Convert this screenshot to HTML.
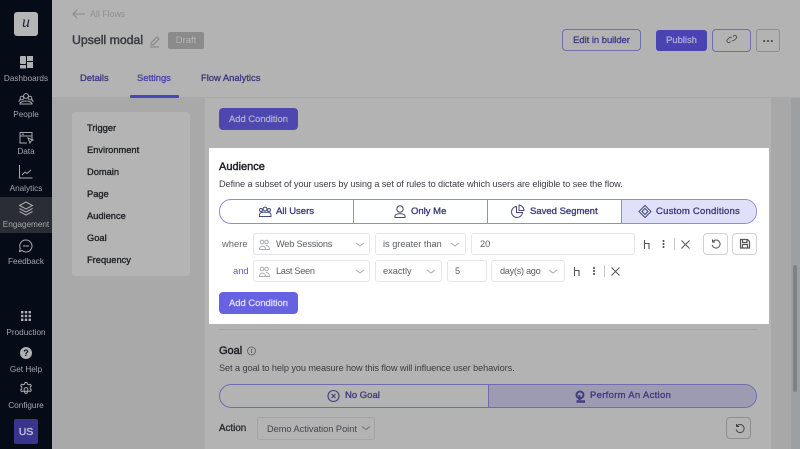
<!DOCTYPE html>
<html><head><meta charset="utf-8">
<style>
html,body{margin:0;padding:0}
body{width:800px;height:449px;overflow:hidden;position:relative;background:#a9a9a9;font-family:"Liberation Sans",sans-serif;font-size:10px;color:#333}
div,span.t{position:absolute;box-sizing:border-box}
.t{white-space:nowrap;line-height:20px;height:20px}
.w{-webkit-text-stroke:.35px currentColor}
svg{position:absolute;overflow:visible}
.s{background:#fff;border:1px solid #e6e6ea;border-radius:3px}
.n{color:#a5a7ab;font-size:8.2px;text-align:center;left:0;width:52px;margin-top:1px}
.m{color:#22242a;font-size:9.300px;left:87px;-webkit-text-stroke:.35px currentColor}
.g{color:#5c5e64;font-size:9.200px}
.ic{fill:none;stroke:#a8aaae;stroke-width:1}
.dk{fill:none;stroke:#444a7a;stroke-width:1}
.p{color:#3f3d7c;font-size:9.500px;-webkit-text-stroke:.35px currentColor}
</style></head><body>
<!-- header -->
<div style="left:52px;top:0;width:748px;height:98px;background:#b3b3b3;border-bottom:1px solid #a9a9a9"></div>
<!-- content bg -->
<div style="left:205px;top:98px;width:566px;height:351px;background:#b3b3b3"></div>
<div style="left:771px;top:98px;width:20px;height:351px;background:#a8a8a8"></div>
<div style="left:791px;top:98px;width:9px;height:351px;background:#9d9fa0"></div>
<div style="left:793px;top:265px;width:4px;height:127px;background:#7f8284;border-radius:2px"></div>
<!-- sidebar -->
<div style="left:0;top:0;width:52px;height:449px;background:#060b18"></div>
<div style="left:0;top:197px;width:52px;height:36px;background:#2a2d33"></div>
<div style="left:14px;top:12px;width:24px;height:24px;background:#b5b5b5;border-radius:3px"></div>
<span class="t" style="left:14px;top:13px;width:24px;text-align:center;font-family:'Liberation Serif',serif;font-style:italic;font-size:16px;color:#23263a">u</span>
<svg style="left:0;top:0" width="52" height="449">
<g fill="#b0b1b3"><rect x="20" y="56" width="6" height="8" rx="1"/><rect x="27" y="56" width="6" height="5"/><rect x="27" y="62" width="6" height="6"/><rect x="20" y="65" width="6" height="3.500"/></g>
<g fill="none" stroke="#a9aaac" stroke-width="1"><circle cx="26" cy="96" r="2.400"/><circle cx="22" cy="98" r="1.800"/><circle cx="30" cy="98" r="1.800"/><path d="M20 104c0-4 12-4 12 0zM19 102c0-2 1-2.500 2-2.500M33 102c0-2-1-2.500-2-2.500"/>
<path d="M32 141v-8.500h-12v10.500h7M20 136h12M22 134.200h2"/><path d="M28 138l5 2-2 1-1 2z"/>
<path d="M19.500 165v13h13M22 175l3-3 2 1.500 4-3.500"/>
<path d="M26 202l6.500 3.500-6.500 3.500-6.500-3.500zM19.500 208.500l6.500 3.500 6.500-3.500M19.500 211.500l6.500 3.500 6.500-3.500"/>
<path d="M26 240a6 6 0 1 1-4 10.500l-2.500 1 .8-3a6 6 0 0 1 5.700-8.500zM23 246h6"/>
<circle cx="26" cy="389.500" r="1.900"/><path d="M25 382.500h2l.4 1.600 1.500.7 1.500-.6 1 1.700-1.200 1.100v1.800l1.200 1.100-1 1.700-1.500-.6-1.500.7-.4 1.600h-2l-.4-1.600-1.500-.7-1.500.6-1-1.700 1.200-1.100v-1.800l-1.200-1.100 1-1.700 1.500.6 1.500-.7z"/></g>
<g fill="#b0b1b3"><rect x="21" y="311" width="2.400" height="2.400"/><rect x="24.800" y="311" width="2.400" height="2.400"/><rect x="28.600" y="311" width="2.400" height="2.400"/><rect x="21" y="314.800" width="2.400" height="2.400"/><rect x="24.800" y="314.800" width="2.400" height="2.400"/><rect x="28.600" y="314.800" width="2.400" height="2.400"/><rect x="21" y="318.600" width="2.400" height="2.400"/><rect x="24.800" y="318.600" width="2.400" height="2.400"/><rect x="28.600" y="318.600" width="2.400" height="2.400"/><circle cx="26" cy="353" r="6"/></g>
</svg>
<span class="t" style="left:20px;top:343px;width:12px;text-align:center;font-weight:bold;font-size:9px;color:#060b18">?</span>
<span class="t n" style="top:68px">Dashboards</span>
<span class="t n" style="top:104px">People</span>
<span class="t n" style="top:141px">Data</span>
<span class="t n" style="top:178px">Analytics</span>
<span class="t n" style="top:214px">Engagement</span>
<span class="t n" style="top:251px">Feedback</span>
<span class="t n" style="top:322px">Production</span>
<span class="t n" style="top:359px">Get Help</span>
<span class="t n" style="top:395px">Configure</span>
<div style="left:14px;top:419px;width:24px;height:25px;background:#39358f;border-radius:2px"></div>
<span class="t w" style="left:14px;top:422px;width:24px;text-align:center;font-size:10.500px;color:#c6c6d8">US</span>
<!-- top -->
<svg style="left:0;top:0" width="800" height="100" fill="none">
<path d="M85 14h-12M77 10l-4 4 4 4" stroke="#8a8a8a"/>
<path d="M151 43l6-6 2 2-6 6h-2zM150 47h9" stroke="#858585"/>
<path d="M733 36.500l.8-.8a1.800 1.800 0 0 1 2.500 2.500l-2 2a1.800 1.800 0 0 1-2.500 0M730.500 41.500l-.8.8a1.800 1.800 0 0 1-2.500-2.500l2-2a1.800 1.800 0 0 1 2.500 0" stroke="#555"/>
</svg>
<span class="t" style="left:90px;top:4px;font-size:8.800px;color:#8f8f8f">All Flows</span>
<span class="t w" style="left:72px;top:30px;font-size:12.300px;color:#383a42;-webkit-text-stroke-width:.45px">Upsell modal</span>
<div style="left:168px;top:32px;width:36px;height:17px;background:#8b8b8b;border-radius:2px"></div>
<span class="t" style="left:168px;top:31px;width:36px;text-align:center;font-size:9.500px;color:#b5b5b5">Draft</span>
<span class="t w" style="left:80px;top:68px;font-size:9.400px;color:#3f3d7c">Details</span>
<span class="t w" style="left:137px;top:68px;font-size:9.400px;color:#4a47a8">Settings</span>
<span class="t w" style="left:201px;top:68px;font-size:9.400px;color:#3f3d7c">Flow Analytics</span>
<div style="left:130px;top:95px;width:49px;height:3px;background:#4a47b4;border-radius:1px"></div>
<div style="left:562px;top:29px;width:79px;height:22px;border:1px solid #6f6cb0;border-radius:4px"></div>
<span class="t w" style="left:562px;top:30px;width:79px;text-align:center;font-size:9.400px;color:#3f3d8f">Edit in builder</span>
<div style="left:656px;top:30px;width:51px;height:21px;background:#4a44b2;border-radius:3px"></div>
<span class="t w" style="left:656px;top:30px;width:51px;text-align:center;font-size:9.400px;color:#a9a8cf">Publish</span>
<div style="left:712px;top:29px;width:39px;height:23px;border:1px solid #6f6cb0;border-radius:4px"></div>
<div style="left:756px;top:29px;width:24px;height:23px;border:1px solid #8e8e8e;border-radius:3px"></div>
<svg style="left:756px;top:29px" width="24" height="23"><g fill="#3a3a3a"><circle cx="8.200" cy="12" r="1"/><circle cx="12" cy="12" r="1"/><circle cx="15.800" cy="12" r="1"/></g></svg>
<!-- left menu -->
<div style="left:72px;top:112px;width:118px;height:164px;background:#b4b4b4;border-radius:3px"></div>
<span class="t m" style="top:118px">Trigger</span>
<span class="t m" style="top:140px">Environment</span>
<span class="t m" style="top:162px">Domain</span>
<span class="t m" style="top:184px">Page</span>
<span class="t m" style="top:206px">Audience</span>
<span class="t m" style="top:228px">Goal</span>
<span class="t m" style="top:250px">Frequency</span>
<!-- upper add -->
<div style="left:219px;top:108px;width:79px;height:22px;background:#4d48b0;border-radius:4px"></div>
<span class="t w" style="left:219px;top:109px;width:79px;text-align:center;font-size:9.400px;color:#a9a8d0">Add Condition</span>
<!-- white -->
<div style="left:209px;top:148px;width:560px;height:176px;background:#fff"></div>
<span class="t w" style="left:219px;top:157px;font-size:11px;color:#1e2027;-webkit-text-stroke-width:.45px">Audience</span>
<span class="t" style="left:219px;top:174px;font-size:9.200px;letter-spacing:-.09px;color:#3c3e46">Define a subset of your users by using a set of rules to dictate which users are eligible to see the flow.</span>
<div style="left:219px;top:199px;width:538px;height:25px;border:1px solid #8e8cd8;border-radius:12px;overflow:hidden;background:#fff">
<div style="left:402px;top:0;width:134px;height:23px;background:#e0e0f8"></div>
<div style="left:133px;top:0;width:1px;height:23px;background:#8e8cd8"></div>
<div style="left:267px;top:0;width:1px;height:23px;background:#8e8cd8"></div>
<div style="left:401px;top:0;width:1px;height:23px;background:#8e8cd8"></div>
</div>
<span class="t" style="left:222px;top:234px;font-size:9.400px;color:#666">where</span>
<span class="t" style="left:233px;top:261px;font-size:9.400px;color:#5d5ad0">and</span>
<div class="s" style="left:253px;top:233px;width:117px;height:22px"></div>
<div class="s" style="left:375px;top:233px;width:91px;height:22px"></div>
<div class="s" style="left:471px;top:233px;width:164px;height:22px"></div>
<div class="s" style="left:253px;top:260px;width:117px;height:22px"></div>
<div class="s" style="left:375px;top:260px;width:67px;height:22px"></div>
<div class="s" style="left:447px;top:260px;width:40px;height:22px"></div>
<div class="s" style="left:491px;top:260px;width:74px;height:22px"></div>
<svg style="left:0;top:0" width="800" height="449">
<g class="dk"><circle cx="265" cy="209" r="1.900"/><circle cx="261" cy="210" r="1.500"/><circle cx="269" cy="210" r="1.500"/><path d="M259.500 216.500h11.500v-1.500c0-2.500-3-2.800-3-2.800h-5.500s-3 .3-3 2.800z"/>
<circle cx="400" cy="209" r="3.200"/><path d="M395 217.500v-1.500c0-3 10-3 10 0v1.500z"/>
<path d="M516.500 206.500a5.500 5.500 0 1 0 6 6h-6zM519 205v5.500h5a5.500 5.500 0 0 0-5-5.500z"/>
<path d="M645 205.500l6 6-6 6-6-6zM645 208.500l3 3-3 3-3-3z"/></g>
<g class="ic"><circle cx="262" cy="242" r="1.800"/><circle cx="266.500" cy="242" r="1.800"/><path d="M259.500 249.500c0-4.500 6-4.500 6 0zM266 245.500c2 0 3.500 1.500 3.500 4h-3.500"/>
<g transform="translate(0,27)"><circle cx="262" cy="242" r="1.800"/><circle cx="266.500" cy="242" r="1.800"/><path d="M259.500 249.500c0-4.500 6-4.500 6 0zM266 245.500c2 0 3.500 1.500 3.500 4h-3.500"/></g>
<path d="M356 243l4 3 4-3M451 243l4 3 4-3M427 270l4 3 4-3M356 270l4 3 4-3M549 270l4 3 4-3"/></g>
<path d="M644.500 240v9M644.500 243.500h4.500v5.500M574.500 267v9M574.500 270.500h4.500v5.500" fill="none" stroke="#555" stroke-width="1.100"/>
<g fill="#444"><circle cx="663.500" cy="241" r="1"/><circle cx="663.500" cy="244" r="1"/><circle cx="663.500" cy="247" r="1"/><circle cx="594" cy="268" r="1"/><circle cx="594" cy="271" r="1"/><circle cx="594" cy="274" r="1"/></g>
<path d="M674.500 238v12M604.500 265v12" stroke="#c8c8c8"/>
<path d="M681.500 240.500l8 8M689.500 240.500l-8 8M611.500 267.500l8 8M619.500 267.500l-8 8" stroke="#555" stroke-width="1"/>
</svg>
<span class="t g" style="left:276px;top:234px;letter-spacing:-.2px">Web Sessions</span>
<span class="t g" style="left:383px;top:234px">is greater than</span>
<span class="t g" style="left:480px;top:234px">20</span>
<span class="t g" style="left:276px;top:261px;letter-spacing:-.3px">Last Seen</span>
<span class="t g" style="left:383px;top:261px">exactly</span>
<span class="t g" style="left:455px;top:261px">5</span>
<span class="t g" style="left:500px;top:261px;letter-spacing:-.3px">day(s) ago</span>
<span class="t p" style="left:276px;top:202px">All Users</span>
<span class="t p" style="left:411px;top:202px">Only Me</span>
<span class="t p" style="left:530px;top:202px">Saved Segment</span>
<span class="t p" style="left:656px;top:202px;letter-spacing:.22px">Custom Conditions</span>
<div style="left:703px;top:233px;width:25px;height:22px;border:1px solid #d2d2d2;border-radius:4px"></div>
<div style="left:732px;top:233px;width:25px;height:22px;border:1px solid #d2d2d2;border-radius:4px"></div>
<svg style="left:0;top:0" width="800" height="449" fill="none" stroke="#555">
<path d="M713 241.500a4 4 0 1 1-.8 3.500M712.500 239.500v2.500h2.500"/>
<path d="M740.500 239.500h7l2 2v6.500h-9zM742.500 239.500v3h4.500v-3M742.500 248v-3.500h5v3.500" stroke-width="1.200"/>
</svg>
<div style="left:219px;top:292px;width:79px;height:22px;background:#6762e2;border-radius:4px"></div>
<span class="t w" style="left:219px;top:293px;width:79px;text-align:center;font-size:9.400px;color:#dcdbf8">Add Condition</span>
<!-- goal -->
<div style="left:219px;top:329px;width:538px;height:1px;background:#a6a6a6"></div>
<span class="t w" style="left:219px;top:341px;font-size:11px;color:#22232a;-webkit-text-stroke-width:.45px">Goal</span>
<svg style="left:0;top:0" width="800" height="449" fill="none" stroke="#6a6a6a">
<circle cx="251.500" cy="351" r="4"/><path d="M251.500 349v4"/>
</svg>
<span class="t" style="left:219px;top:358px;font-size:9.200px;letter-spacing:-.09px;color:#3b3c40">Set a goal to help you measure how this flow will influence user behaviors.</span>
<div style="left:219px;top:384px;width:538px;height:24px;border:1px solid #6f6cb0;border-radius:12px;overflow:hidden">
<div style="left:268px;top:0;width:268px;height:22px;background:#9d9bb2;border-left:1px solid #6f6cb0"></div>
</div>
<svg style="left:0;top:0" width="800" height="449" fill="none" stroke="#3f3d7c" stroke-width="1.100">
<circle cx="333.500" cy="396" r="5.500"/><path d="M331.500 394l4 4M335.500 394l-4 4"/>
<circle cx="580" cy="395" r="3.500" stroke-width="2"/><path d="M576.500 401.500h8.500" stroke-width="2.500"/><path d="M579.500 395v5" stroke-width="2"/>
<path d="M737 426a4 4 0 1 1-.8 3.500M736.500 424v2.500h2.500" stroke="#454545" stroke-width="1"/>
<path d="M362 426.500l4 3 4-3" stroke="#7d7d7d"/>
</svg>
<span class="t p" style="left:345px;top:386px">No Goal</span>
<span class="t p" style="left:590px;top:386px;letter-spacing:.3px">Perform An Action</span>
<span class="t w" style="left:219px;top:419px;font-size:9.800px;color:#2e2f33">Action</span>
<div style="left:257px;top:417px;width:118px;height:23px;border:1px solid #a4a4a4;border-radius:3px"></div>
<span class="t" style="left:267px;top:419px;font-size:9.200px;color:#45464a">Demo Activation Point</span>
<div style="left:726px;top:417px;width:25px;height:22px;border:1px solid #8e8e8e;border-radius:4px"></div>
</body></html>
